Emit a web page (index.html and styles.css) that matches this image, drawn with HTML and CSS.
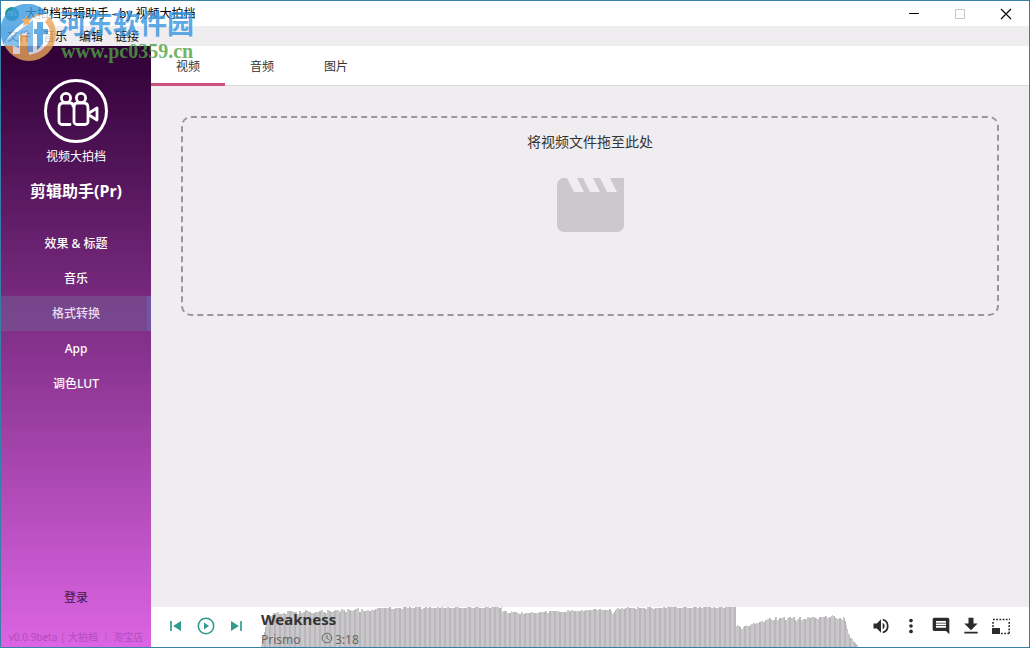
FILE: index.html
```html
<!DOCTYPE html>
<html lang="zh-CN">
<head>
    <meta charset="UTF-8">
    <meta name="viewport" content="width=device-width, initial-scale=1.0">
    <title>大拍档剪辑助手 - by 视频大拍档</title>
    <link rel="stylesheet" href="styles.css">
</head>
<body>
    <div class="window">
        <header class="titlebar">
            <svg class="app-icon" viewBox="0 0 14 14" width="14" height="14">
                <circle cx="7" cy="7" r="7" fill="#14998c"/>
                <path d="M3 9V6a1 1 0 0 1 3 0v3M7 9V6a1 1 0 0 1 3 0v3l2-1" fill="none" stroke="#c9f3ee"/>
            </svg>
            <h1 class="window-title">大拍档剪辑助手 - by 视频大拍档</h1>
            <div class="window-buttons">
                <button aria-label="最小化"><svg width="12" height="12" viewBox="0 0 12 12"><path d="M1 5.5h10" stroke="#000"/></svg></button>
                <button aria-label="最大化" disabled><svg width="12" height="12" viewBox="0 0 12 12"><path d="M1.5 1.5h9v9h-9z" fill="none" stroke="#c8c8c8"/></svg></button>
                <button aria-label="关闭"><svg width="12" height="12" viewBox="0 0 12 12"><path d="M1 1l10 10M11 1L1 11" stroke="#000" stroke-width="1.2"/></svg></button>
            </div>
        </header>

        <nav class="menubar">
            <button>文件</button>
            <button>音乐</button>
            <button>编辑</button>
            <button>链接</button>
        </nav>

        <div class="body">
            <aside class="sidebar">
                <svg class="logo" viewBox="0 0 64 64" width="64" height="64" fill="none" stroke="#fff">
                    <circle cx="32" cy="32" r="30.5" stroke-width="3"/>
                    <g stroke-width="2.8" stroke-linecap="round" stroke-linejoin="round">
                        <circle cx="22" cy="19" r="4.6"/>
                        <circle cx="37" cy="19" r="4.6"/>
                        <path d="M26 45.500h-8a3 3 0 0 1-3-3V29q0-5 4-5h7q3 0 3 3"/>
                        <path d="M33 24h7q4 0 4 5v13.500a3 3 0 0 1-3 3h-8a3 3 0 0 1-3-3V29q0-5 3-5z"/>
                        <path d="M45 34l8-5v12l-8-5"/>
                    </g>
                </svg>
                <p class="brand">视频大拍档</p>
                <h2 class="product">剪辑助手(Pr)</h2>
                <nav class="side-nav">
                    <a href="#effects">效果 &amp; 标题</a>
                    <a href="#music">音乐</a>
                    <a href="#convert" class="active">格式转换</a>
                    <a href="#app">App</a>
                    <a href="#lut">调色LUT</a>
                </nav>
                <a class="login" href="#login">登录</a>
                <p class="version">v0.0.9beta | <a href="#home">大拍档</a> ｜ <a href="#shop">淘宝店</a></p>
            </aside>

            <main class="main">
                <nav class="tabs">
                    <button class="active">视频</button>
                    <button>音频</button>
                    <button>图片</button>
                </nav>

                <section class="content">
                    <div class="dropzone">
                        <p>将视频文件拖至此处</p>
                        <svg viewBox="0 0 67 54" width="67" height="54">
                            <path d="M7 0H10L17 14H27L20 0H26L33 14H43L36 0H43L50 14H60L53 0H67V47a7 7 0 0 1-7 7H7a7 7 0 0 1-7-7V7a7 7 0 0 1 7-7z" fill="#cbc9cc"/>
                        </svg>
                    </div>
                </section>

                <footer class="player">
                    <div class="controls">
                        <button aria-label="上一首"><svg viewBox="0 0 24 24" width="20" height="20"><path d="M5 6h2v12H5zM8.5 12L18 18V6z"/></svg></button>
                        <button aria-label="播放"><svg viewBox="0 0 20 20" width="20" height="20"><circle cx="10" cy="10" r="7.7" fill="none" stroke="#2f9c8c" stroke-width="1.6"/><path d="M8 6.5v7l5-3.5z"/></svg></button>
                        <button aria-label="下一首"><svg viewBox="0 0 24 24" width="20" height="20"><path d="M6 18l9.5-6L6 6zM17 6h2v12h-2z"/></svg></button>
                    </div>
                    <div class="track">
                        <svg class="wave" id="wave" viewBox="0 0 597 40" preserveAspectRatio="none"></svg>
                        <div class="track-info">
                            <strong>Weakness</strong>
                            <div class="track-meta">
                                <span class="artist">Prismo</span>
                                <svg viewBox="0 0 12 12" width="12" height="12" fill="none" stroke="#666"><circle cx="6" cy="6" r="4.8"/><path d="M6 3v3.5l2 1"/></svg>
                                <span>3:18</span>
                            </div>
                        </div>
                    </div>
                    <div class="actions">
                        <button aria-label="音量"><svg viewBox="0 0 24 24" width="20" height="20"><path d="M3 9v6h4l5 5V4L7 9zM14 8v8a4.5 4.5 0 0 0 0-8zM14 3.2v2.1a7 7 0 0 1 0 13.4v2.1a9 9 0 0 0 0-17.6z"/></svg></button>
                        <button aria-label="更多"><svg viewBox="0 0 24 24" width="20" height="20"><circle cx="12" cy="5.5" r="2.2"/><circle cx="12" cy="12" r="2.2"/><circle cx="12" cy="18.5" r="2.2"/></svg></button>
                        <button aria-label="评论"><svg viewBox="0 0 24 24" width="20" height="20"><path d="M22 4a2 2 0 0 0-2-2H4a2 2 0 0 0-2 2v12c0 1.1.9 2 2 2h14l4 4zM18 14H6v-2h12zM18 11H6V9h12zM18 8H6V6h12z"/></svg></button>
                        <button aria-label="下载"><svg viewBox="0 0 24 24" width="20" height="20"><path d="M20 9h-5V2H9v7H4l8 8zM4 19v2h16v-2z"/></svg></button>
                        <button aria-label="小窗"><svg viewBox="0 0 20 18" width="20" height="18"><path d="M2 2.5h17M18.2 5v12M10 16.500h8M2 5v6" fill="none" stroke="#2b2b2e" stroke-width="1.6" stroke-dasharray="1.8 1.4"/><path d="M1 11h8v6H1z"/></svg></button>
                    </div>
                </footer>
            </main>
        </div>

        <div class="watermark">
            <svg viewBox="0 0 58 58" width="58" height="58">
                <circle cx="28" cy="30" r="27" fill="#e9a45a"/>
                <path d="M1 36A27 27 0 0 1 49 12L36 10 18 24 3 42z" fill="#3d9be0"/>
                <path d="M2 42Q16 14 50 9Q48 14 44 18Q52 26 48 37Q42 49 28 51V31H19V50H12V38Q6 38 2 42z" fill="#fff"/>
                <path d="M4 37L32 16V48H26V28L18 31V44Q10 40 4 42z" fill="#6fb5ec"/>
                <path d="M36 18h6v7h5v5h-5v10l-6 6V30h-3v-5h3z" fill="#3d9be0"/>
                <path d="M26 11l1 4h4l-3 3 1 4-3-2-4 2 1-4-3-3h4z" fill="#efa04a"/>
            </svg>
            <div class="watermark-text">
                <span class="site-name">河东软件园</span>
                <span class="site-url">www.pc0359.cn</span>
            </div>
        </div>
    </div>

    <script src="wave.js"></script>
</body>
</html>
```
FILE: styles.css
```css
* {
    margin: 0;
    padding: 0;
    box-sizing: border-box;
}
body {
    font-family: 'Noto Sans', 'Noto Sans CJK SC', sans-serif;
    font-size: 12px;
    color: #333;
}
button {
    border: none;
    background: none;
    font: inherit;
    color: inherit;
    cursor: pointer;
}
a {
    color: inherit;
    text-decoration: none;
}
.window {
    position: relative;
    display: flex;
    flex-direction: column;
    min-height: 100vh;
    border: 1px solid #367fa9;
    background-color: #efedf0;
}

/* title bar and menu */
.titlebar {
    display: flex;
    align-items: center;
    height: 25px;
    padding-left: 4px;
    background-color: #fff;
}
.window-title {
    flex: 1;
    margin-left: 6px;
    font-size: 12px;
    font-weight: 400;
    line-height: 20px;
    color: #000;
}
.window-buttons {
    display: flex;
}
.window-buttons button {
    display: flex;
    align-items: center;
    justify-content: center;
    width: 46px;
    height: 25px;
}
.menubar {
    display: flex;
    gap: 12px;
    height: 20px;
    padding-left: 6px;
    color: #111;
}

.body {
    display: flex;
    flex: 1;
}

/* sidebar */
.sidebar {
    display: flex;
    flex-direction: column;
    align-items: center;
    width: 150px;
    padding-top: 33px;
    background: linear-gradient(#2f0035, #dc64e4);
    color: #fff;
}
.brand {
    margin-top: 4px;
    line-height: 20px;
}
.product {
    margin-top: 12px;
    font-size: 16px;
    font-weight: 700;
    line-height: 24px;
}
.side-nav {
    width: 100%;
    margin-top: 23px;
}
.side-nav a {
    display: block;
    height: 35px;
    line-height: 35px;
    text-align: center;
    font-weight: 500;
}
.side-nav .active {
    border-right: 4px solid #7256a4;
    padding-left: 4px;
    background-color: rgba(115, 95, 150, 0.5);
    background-clip: padding-box;
    color: #eadcf0;
}
.login {
    margin-top: auto;
    line-height: 20px;
    color: #3c1845;
}
.version {
    margin: 20px 0 1px;
    font-size: 10px;
    line-height: 18px;
    white-space: nowrap;
    color: #b04fba;
}

/* tabs */
.main {
    display: flex;
    flex: 1;
    flex-direction: column;
    min-width: 0;
}
.tabs {
    display: flex;
    height: 40px;
    border-bottom: 1px solid #d9d7da;
    background-color: #fff;
}
.tabs button {
    width: 74px;
    height: 40px;
    padding-top: 2px;
    border-bottom: 3px solid transparent;
}
.tabs .active {
    border-color: #cf4f7e;
}

.content {
    flex: 1;
    padding: 30px;
}
.dropzone {
    display: flex;
    flex-direction: column;
    align-items: center;
    gap: 25px;
    height: 200px;
    padding-top: 13px;
    border: 2px dashed #99979a;
    border-radius: 10px;
}
.dropzone p {
    font-size: 14px;
    line-height: 22px;
}

/* player */
.player {
    display: flex;
    height: 40px;
    padding-right: 13px;
    background-color: #fff;
}
.controls,
.actions {
    display: flex;
    align-items: flex-start;
}
.controls {
    width: 110px;
    padding-left: 10px;
    fill: #2f9c8c;
}
.controls button,
.actions button {
    display: flex;
    align-items: center;
    justify-content: center;
    width: 30px;
    height: 37px;
}
.actions {
    margin-left: 8px;
    fill: #2b2b2e;
}
.track {
    position: relative;
    flex: 1;
    height: 40px;
}
.wave {
    display: block;
    width: 100%;
    height: 40px;
}
.track-info {
    position: absolute;
    top: 1px;
    left: 0;
}
.track-info strong {
    display: block;
    font-size: 15px;
    line-height: 22px;
}
.track-meta {
    display: flex;
    line-height: 20px;
    color: #666;
}
.artist {
    width: 60px;
}
.track-meta svg {
    margin: 2px 2px 0 0;
}

/* site watermark over the top left corner */
.watermark {
    position: absolute;
    top: 3px;
    left: 0;
    display: flex;
    opacity: 0.8;
    pointer-events: none;
}
.watermark-text {
    display: flex;
    flex-direction: column;
    padding-top: 6px;
}
.site-name {
    font-size: 27px;
    font-weight: 700;
    line-height: 28px;
    color: #3596e2;
}
.site-url {
    padding: 2px 0 0 2px;
    font-family: 'Liberation Serif', serif;
    font-size: 20px;
    font-weight: 700;
    line-height: 22px;
    color: #4fa343;
}
```
FILE: wave.js
```js
// loudness of the track: [x, height, jitter]
const levels = [
    [0, 2, 1], [6, 28, 4], [12, 34, 4], [60, 35, 4], [105, 37, 3],
    [122, 39, 2], [240, 40, 1], [241, 35, 2], [262, 34, 2], [310, 36, 2],
    [349, 38, 2], [351, 33, 2], [356, 39, 2], [474, 40, 2], [475, 21, 2],
    [480, 19, 2], [500, 26, 3], [512, 29, 4], [540, 28, 4], [580, 30, 5],
    [584, 26, 3], [589, 9, 2], [597, 2, 1]
];

const wave = document.getElementById('wave');
let bars = '';
let k = 0;
let seed = 7;
for (let x = 0; x < 597; x++) {
    while (x >= levels[k + 1][0]) k++;
    const [x1, h1, jitter] = levels[k];
    const [x2, h2] = levels[k + 1];
    const base = h1 + (h2 - h1) * (x - x1) / (x2 - x1);
    if (x % 2 === 0) seed = (seed * 1103 + 377) % 9973;
    const h = Math.max(1, Math.min(40, Math.round(base + (seed / 9973 - 0.5) * jitter)));
    bars += `<rect x="${x}" y="${40 - h}" width="1" height="${h}" fill="${x % 5 < 3 ? '#c9c7ca' : '#b9b7ba'}"/>`;
}
wave.innerHTML = bars;
```
